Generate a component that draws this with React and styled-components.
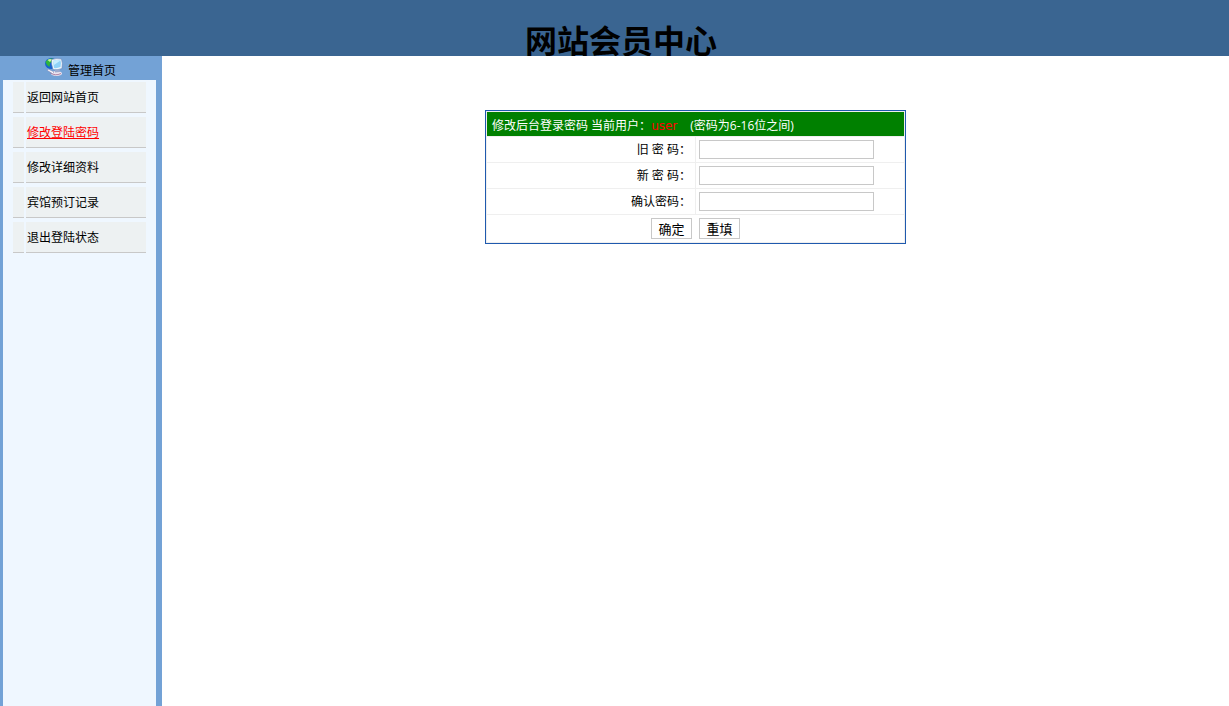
import React, { useState } from 'react';
import styled, { createGlobalStyle } from 'styled-components';

const GlobalStyle = createGlobalStyle`
  body {
    margin: 0;
    background: #ffffff;
    color: #000000;
    font-family: "Open Sans", "Noto Sans CJK SC", sans-serif;
    font-size: 12px;
    line-height: 18px;
  }
`

const Page = styled.div`
  display: grid;
  grid-template-columns: 162px 1fr;
  grid-template-rows: 56px 1fr;
  min-height: 100vh;
`

const Header = styled.header`
  grid-column: 1 / 3;
  overflow: hidden;
  background: #3a6591;
  padding: 20px 0 0 13px;
  text-align: center;
`

const Title = styled.h1`
  margin: 0;
  font-size: 32px;
  line-height: 42px;
  font-weight: bold;
`

const Sidebar = styled.aside`
  display: flex;
  flex-direction: column;
  box-sizing: border-box;
  padding: 0 6px 0 3px;
  background: #73a2d6;
`

const HomeLink = styled.a`
  display: flex;
  justify-content: center;
  align-items: center;
  gap: 5px;
  height: 24px;
  padding-left: 2px;
  color: #000000;
  text-decoration: none;

  span {
    padding-top: 6px;
  }
`

const Menu = styled.nav`
  flex: 1;
  display: flex;
  flex-direction: column;
  gap: 4px;
  padding: 2px 10px;
  background: #eff7ff;
`

const MenuRow = styled.div`
  display: grid;
  grid-template-columns: 11px 1fr;
  gap: 2px;
`

const MenuCell = styled.div`
  box-sizing: border-box;
  height: 31px;
  padding-left: 1px;
  line-height: 32px;
  background: #edf1f2;
  border-bottom: 1px solid #c8c8c8;
`

const MenuLink = styled.a`
  color: ${props => props.$active ? "#ff0000" : "#000000"};
  text-decoration: ${props => props.$active ? "underline" : "none"};
`

const Main = styled.main`
  padding-top: 54px;
`

const FormTable = styled.table`
  width: 421px;
  margin: 0 auto;
  table-layout: fixed;
  border: 1px solid #1f5aae;
  border-collapse: separate;
  border-spacing: 1px;
  background: #efefef;
`

const TableHead = styled.th`
  box-sizing: border-box;
  height: 24px;
  padding: 4px 5px 0;
  background: #008000;
  color: #ffffff;
  font-weight: normal;
  text-align: left;
`

const UserName = styled.span`
  margin-right: 13px;
  color: #ff0000;
  font-family: "DejaVu Sans", sans-serif;
  font-size: 12px;
`

const LabelCell = styled.td`
  height: 25px;
  padding: 0 4px;
  background: #ffffff;
  text-align: right;
`

const FieldCell = styled.td`
  padding: 0 3px;
  background: #ffffff;
`

const Field = styled.input`
  display: block;
  box-sizing: border-box;
  width: 175px;
  height: 19px;
  padding: 0 2px;
  border: 1px solid #c8c8c8;
  background: #ffffff;
  font-size: 12px;
`

const ButtonCell = styled.td`
  height: 27px;
  padding: 0;
  background: #ffffff;
`

const Buttons = styled.div`
  display: flex;
  justify-content: center;
  gap: 7px;
`

const Button = styled.button`
  box-sizing: border-box;
  width: 41px;
  height: 21px;
  padding: 1px 0 0;
  border: 1px solid #c8c8c8;
  background: #ffffff;
  color: #000000;
  font-family: inherit;
  font-size: 13px;
  line-height: 18px;
`

const menuItems = ["返回网站首页", "修改登陆密码", "修改详细资料", "宾馆预订记录", "退出登陆状态"];

const fields = [
  { id: "oldPwd", label: "旧 密 码：" },
  { id: "newPwd", label: "新 密 码：" },
  { id: "confirmPwd", label: "确认密码：" },
];

// globe standing behind a small monitor
function HomeIcon(){
  return(
    <svg width="18" height="20" viewBox="0 0 18 20" aria-hidden="true">
      <ellipse cx="11.500" cy="15.500" rx="5.500" ry="2.500" fill="#ece4ee" />
      <path d="M5 14.500 Q10 18.500 16 15.500" stroke="#a06a91" strokeWidth="0.8" fill="none" />
      <ellipse cx="6.500" cy="5.500" rx="6.500" ry="5.500" fill="#1763cf" />
      <path d="M0.500 4 Q3 0 8 0.500 L7 4 L5 5 L4.500 9 L2 7Z" fill="#2fb53b" />
      <path d="M2.500 2 Q5 0.500 7 1.500 L5 4Z" fill="#c9f79b" />
      <path d="M6.500 1.500 Q11 0 16.500 1 Q18 5 17 10.500 Q12 12.500 8 11.500 Q6 6 6.500 1.500Z" fill="#eef5fc" stroke="#6c87b7" strokeWidth="0.6" />
      <path d="M8 3 Q11 1.500 15.500 2.500 Q16.500 5 15.500 9 Q12 10.500 9 10Z" fill="#8fd2f8" />
      <path d="M8 3 Q11 1.500 15.500 2.500 L9 7Z" fill="#c6edff" />
      <path d="M10 12 L14.500 11.500 L15 14 L10 14.500Z" fill="#9caace" />
      <path d="M3 11 L9 14 L7.500 15.500 L2.500 12.500Z" fill="#ffffff" stroke="#7f7eaf" strokeWidth="0.5" />
    </svg>
  );
}

function SideMenu(){
  const [active, setActive] = useState("修改登陆密码");
  return(
    <Menu>
      {menuItems.map(item => (
        <MenuRow key={item}>
          <MenuCell />
          <MenuCell>
            <MenuLink href="#" $active={item === active} onClick={() => setActive(item)}>
              {item}
            </MenuLink>
          </MenuCell>
        </MenuRow>
      ))}
    </Menu>
  );
}

function PasswordForm(){
  return(
    <form onSubmit={e => e.preventDefault()}>
      <FormTable>
        <thead>
          <tr>
            <TableHead colSpan="2">
              修改后台登录密码 当前用户：<UserName>user</UserName>(密码为6-16位之间)
            </TableHead>
          </tr>
        </thead>
        <tbody>
          {fields.map(field => (
            <tr key={field.id}>
              <LabelCell>
                <label htmlFor={field.id}>{field.label}</label>
              </LabelCell>
              <FieldCell>
                <Field type="password" id={field.id} name={field.id} />
              </FieldCell>
            </tr>
          ))}
          <tr>
            <ButtonCell colSpan="2">
              <Buttons>
                <Button type="submit">确定</Button>
                <Button type="reset">重填</Button>
              </Buttons>
            </ButtonCell>
          </tr>
        </tbody>
      </FormTable>
    </form>
  );
}

function App(){
  return(
    <Page>
      <GlobalStyle />
      <Header>
        <Title>网站会员中心</Title>
      </Header>
      <Sidebar>
        <HomeLink href="#">
          <HomeIcon />
          <span>管理首页</span>
        </HomeLink>
        <SideMenu />
      </Sidebar>
      <Main>
        <PasswordForm />
      </Main>
    </Page>
  );
}

export default App;
